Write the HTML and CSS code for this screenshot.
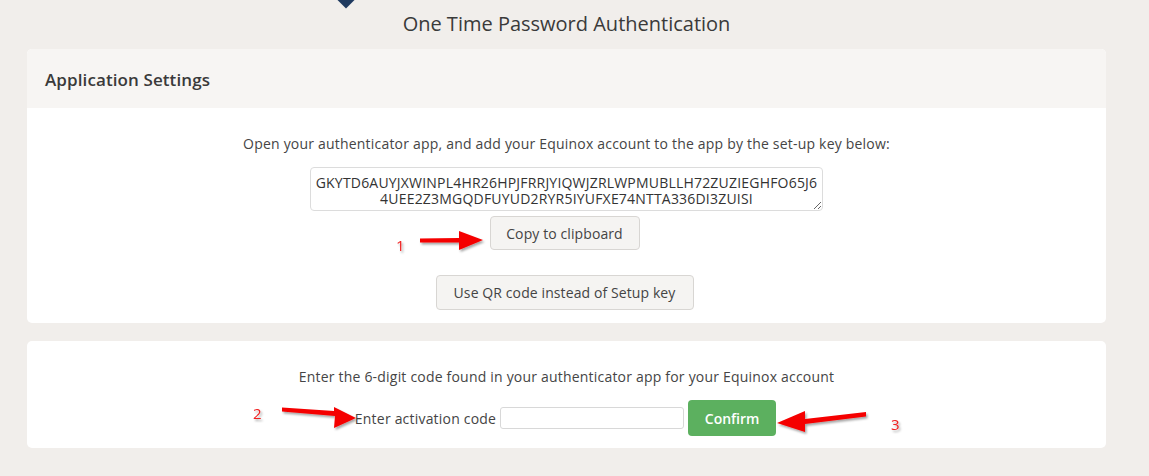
FILE: index.html
```html
<!DOCTYPE html>
<html>
<head>
<meta charset="utf-8">
<link rel="stylesheet" href="styles.css">
</head>
<body>
<div class="page">
  <div class="title-bar">
    <span class="pointer"></span>
    <h1 class="title">One Time Password Authentication</h1>
  </div>
  <section class="panel">
    <div class="panel-head">Application Settings</div>
    <div class="panel-body">
      <p class="hint">Open your authenticator app, and add your Equinox account to the app by the set-up key below:</p>
      <textarea class="key" readonly>GKYTD6AUYJXWINPL4HR26HPJFRRJYIQWJZRLWPMUBLLH72ZUZIEGHFO65J6 4UEE2Z3MGQDFUYUD2RYR5IYUFXE74NTTA336DI3ZUISI</textarea>
      <button class="btn btn-copy">Copy to clipboard</button>
      <button class="btn btn-qr">Use QR code instead of Setup key</button>
    </div>
  </section>
  <section class="panel panel-confirm">
    <p class="hint">Enter the 6-digit code found in your authenticator app for your Equinox account</p>
    <div class="code-row">
      <label class="code-label">Enter activation code</label>
      <input class="code-input" type="text">
      <button class="btn-confirm">Confirm</button>
    </div>
  </section>
</div>
<svg class="annot" width="1149" height="476" viewBox="0 0 1149 476">
  <defs>
    <filter id="sh" x="-20%" y="-50%" width="140%" height="200%">
      <feDropShadow dx="1.5" dy="2" stdDeviation="1.2" flood-color="#000" flood-opacity="0.35"/>
    </filter>
  </defs>
  <g fill="#f50000" filter="url(#sh)">
    <polygon points="420,238.5 459,238 459,231 483,240 459,250 459,242.5 420,242.5"/>
    <polygon points="282,407.5 334,411 334,407 356,418 334,428 335,416 282,411.5"/>
    <polygon points="866,412 805,419 805,411 777,423 805,432 805,424 866,416.5"/>
  </g>
  <g class="num" filter="url(#sh)">
    <text x="396" y="251">1</text>
    <text x="253" y="419">2</text>
    <text x="891" y="430">3</text>
  </g>
</svg>
</body>
</html>
```
FILE: styles.css
```css
* { box-sizing: border-box; }
html, body {
  margin: 0;
  padding: 0;
  background: #f1eeeb;
  font-family: "Open Sans", "Liberation Sans", sans-serif;
  color: #444;
}
body { width: 1149px; height: 476px; overflow: hidden; position: relative; }
.page {
  padding: 0 43px 0 27px;
}
.title-bar {
  height: 49px;
  position: relative;
  display: flex;
  justify-content: center;
  align-items: flex-start;
}
.pointer {
  position: absolute;
  left: 313px;
  top: -6px;
  width: 12px;
  height: 12px;
  background: #1f3a5f;
  transform: rotate(45deg);
}
.title {
  margin: 10px 0 0;
  font-size: 20px;
  font-weight: 400;
  line-height: 27px;
  color: #3a3a3a;
}
.panel {
  background: #fff;
  border-radius: 5px;
  overflow: hidden;
}
.panel-head {
  height: 59px;
  background: #f7f5f3;
  padding: 0 18px;
  display: flex;
  align-items: center;
  font-size: 17px;
  font-weight: 600;
  color: #3a3a3a;
  padding-top: 1px;
  letter-spacing: 0.1px;
}
.panel-body {
  display: flex;
  flex-direction: column;
  align-items: center;
  padding: 27px 0 13px;
}
.hint {
  margin: 0;
  font-size: 14px;
  line-height: 18px;
  color: #454545;
  letter-spacing: 0.2px;
}
.key {
  margin-top: 14px;
  width: 513px;
  height: 44px;
  border: 1px solid #dcdcdc;
  border-radius: 4px;
  font-family: "Open Sans", "Liberation Sans", sans-serif;
  font-size: 14px;
  letter-spacing: 0.2px;
  line-height: 16px;
  color: #333;
  text-align: center;
  padding: 7px 2px 2px;
  resize: both;
  overflow: hidden;
}
.btn {
  font-family: "Open Sans", "Liberation Sans", sans-serif;
  font-size: 14px;
  color: #444;
  background: #f5f4f2;
  border: 1px solid #d8d6d3;
  border-radius: 4px;
  padding: 0 8px;
  cursor: pointer;
  letter-spacing: 0.1px;
  margin-right: 4px;
}
.btn-copy {
  margin-top: 5px;
  width: 150px;
  height: 34px;
}
.btn-qr {
  margin-top: 25px;
  width: 258px;
  height: 35px;
}
.panel-confirm {
  margin-top: 18px;
  display: flex;
  flex-direction: column;
  align-items: center;
  padding: 27px 0 12px;
}
.code-row {
  margin-top: 14px;
  display: flex;
  align-items: center;
  gap: 4px;
  padding-right: 2px;
}
.code-label {
  font-size: 14px;
  letter-spacing: 0.2px;
  color: #444;
}
.code-input {
  width: 184px;
  height: 22px;
  border: 1px solid #d8d8d8;
  border-radius: 3px;
  outline: none;
}
.btn-confirm {
  width: 88px;
  height: 36px;
  background: #5cb05f;
  color: #fff;
  border: none;
  border-radius: 4px;
  font-family: "Open Sans", "Liberation Sans", sans-serif;
  font-size: 14px;
  font-weight: 600;
}
.annot {
  position: absolute;
  left: 0;
  top: 0;
  pointer-events: none;
}
.num text {
  font-family: "Open Sans", "Liberation Sans", sans-serif;
  font-size: 15px;
  fill: #f02020;
}
```
